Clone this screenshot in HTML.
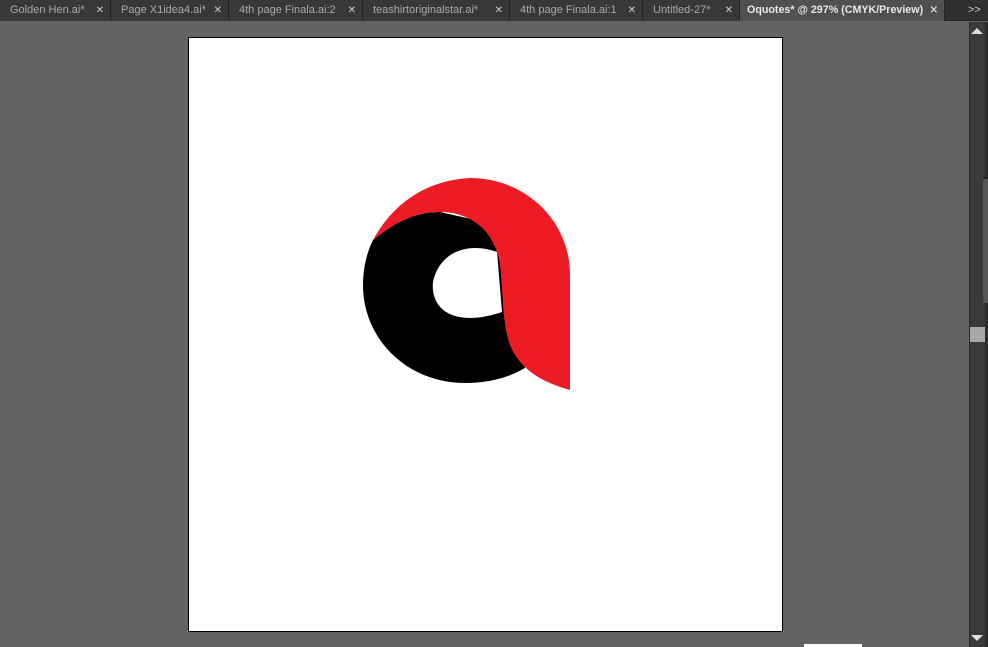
<!DOCTYPE html>
<html><head><style>
*{margin:0;padding:0;box-sizing:border-box}
body{width:988px;height:647px;background:#636363;position:relative;overflow:hidden;font-family:"Liberation Sans",sans-serif}
.bar{position:absolute;left:0;top:0;width:988px;height:21px;background:#2f2f2f;border-bottom:1px solid #262626}
.tab{position:absolute;top:0;height:21px;line-height:21px;font-size:11px;color:#a9a9a9;padding-left:10px;border-right:1px solid #222;background:#383838;white-space:nowrap;overflow:hidden}
.tab.act{background:#505050;color:#e8e8e8;font-weight:bold;font-size:10.7px}
.x{position:absolute;right:6px;top:0;font-size:10px;color:#ccc}
</style></head><body>
<div class="bar">
<div class="tab" style="left:0;width:111px">Golden Hen.ai*<span class="x">✕</span></div>
<div class="tab" style="left:111px;width:118px">Page X1idea4.ai*<span class="x">✕</span></div>
<div class="tab" style="left:229px;width:134px">4th page Finala.ai:2<span class="x">✕</span></div>
<div class="tab" style="left:363px;width:147px">teashirtoriginalstar.ai*<span class="x">✕</span></div>
<div class="tab" style="left:510px;width:133px">4th page Finala.ai:1<span class="x">✕</span></div>
<div class="tab" style="left:643px;width:97px">Untitled-27*<span class="x">✕</span></div>
<div class="tab act" style="left:740px;width:205px;padding-left:7px">Oquotes* @ 297% (CMYK/Preview)<span class="x">✕</span></div>
<div style="position:absolute;left:968px;top:0;color:#ccc;font-size:11px;line-height:21px">&gt;&gt;</div>
</div>
<div style="position:absolute;left:188px;top:37px;width:595px;height:595px;background:#fff;border:1px solid #000"></div>
<svg style="position:absolute;left:0;top:0" width="988" height="647">
<path d="M373,240 C395,222 415,212 440,212 L520,230 L525,368 C508,378 488,383 465,383 C408,383 363,340 363,285 C363,268 367,252 373,240 Z" fill="#000"/>
<path d="M497,252 C470,242 440,250 433,282 C430,310 455,328 502,312 Z" fill="#fff"/>
<path d="M373,240 C395,200 430,180 470,178 C525,178 570,220 570,275 L570,390 C545,383 515,370 507,335 C502,310 503,290 500,265 C495,230 470,212 440,212 C415,212 395,222 373,240 Z" fill="#ed1c24"/>
</svg>
<div style="position:absolute;left:969px;top:22px;width:16px;height:625px;background:#3a3a3a;border-left:1px solid #2a2a2a"></div>
<div style="position:absolute;left:971px;top:28px;width:0;height:0;border-left:6px solid transparent;border-right:6px solid transparent;border-bottom:6px solid #ddd"></div>
<div style="position:absolute;left:971px;top:635px;width:0;height:0;border-left:6px solid transparent;border-right:6px solid transparent;border-top:6px solid #ddd"></div>
<div style="position:absolute;left:970px;top:327px;width:15px;height:15px;background:#a8a8a8"></div>
<div style="position:absolute;left:985px;top:22px;width:3px;height:625px;background:#2c2c2c"></div>
<div style="position:absolute;left:983px;top:177px;width:5px;height:126px;background:#555;border-top:2px solid #222"></div>
<div style="position:absolute;left:804px;top:644px;width:58px;height:3px;background:#fff"></div>
</body></html>
